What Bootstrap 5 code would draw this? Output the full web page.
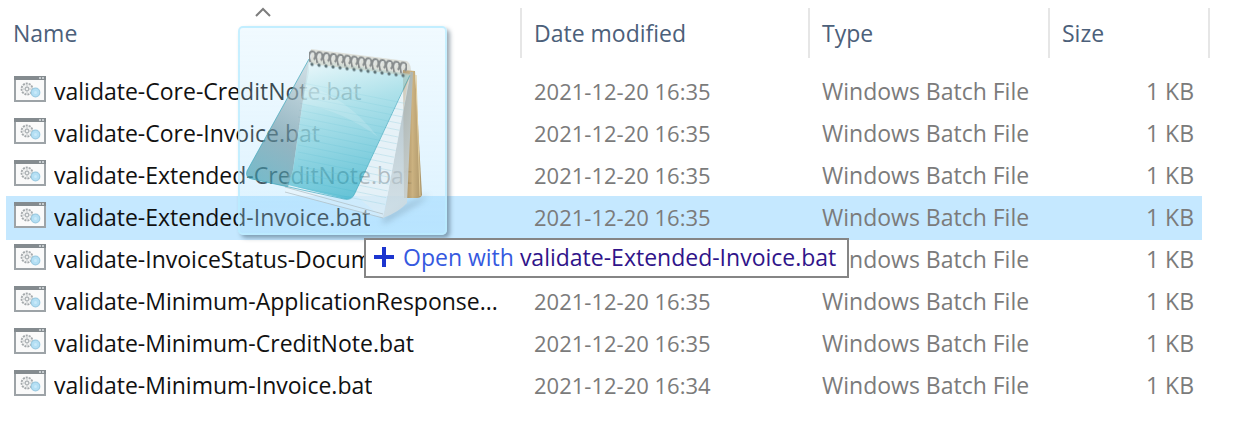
<!DOCTYPE html>
<html lang="en">
<head>
<meta charset="utf-8">
<meta name="viewport" content="width=device-width, initial-scale=1">
<title>Batch files</title>
<link rel="stylesheet" href="https://cdn.jsdelivr.net/npm/bootstrap@5.3.0/dist/css/bootstrap.min.css">
<style>
  body { font-family: "Open Sans", "Noto Sans", sans-serif; font-size: 23px; line-height: 32px; background: #fff; }
  .explorer { padding: 8px 42px 0 6px; }
  .file-list { table-layout: fixed; border-collapse: separate; border-spacing: 0; }
  .col-date { width: 288px; }
  .col-type { width: 240px; }
  .col-size { width: 160px; }
  .file-list th { height: 50px; padding: 0 12px; border-right: 2px solid #e6e6e6; color: #4c607a; font-weight: 400; vertical-align: middle; }
  .file-list th:first-child { padding-left: 7px; }
  .file-list tbody::before { content: ""; display: block; height: 13px; }
  .file-list td { height: 42px; padding: 0 12px 2px; color: #7b7b7b; white-space: nowrap; vertical-align: middle; }
  .file-list td:first-child { padding: 0 12px 2px 8px; color: #111; }
  .file-list td:nth-child(2) { font-size: 22px; }
  .file-list td:last-child { padding-right: 16px; text-align: right; }
  .file-list .picked td { background: #c5e8ff; box-shadow: 0 1px #c5e8ff, 0 -1px #c5e8ff; }
  .file-list .picked td:last-child { clip-path: inset(-1px 8px -1px 0); }
  .bat-icon { width: 32px; height: 26px; margin-bottom: 4px; flex: none; }
  .sort-mark { top: -2px; width: 18px; height: 12px; }
  .drag-ghost { left: 238px; top: 26px; width: 209px; height: 209px; border: 2px solid rgba(185,236,255,.75); border-radius: 5px;
    background: linear-gradient(rgba(190,232,255,.22), rgba(165,222,255,.38)); box-shadow: 3px 3px 4px rgba(60,85,105,.5); }
  .drop-tip { left: 364px; top: 238px; height: 40px; padding: 0 11px 2px 7px; border: 2px solid #858585; background: #fff; color: #3659e0; }
  .drop-tip b { color: #30148a; font-weight: 400; }
</style>
</head>
<body>
<svg class="d-none" aria-hidden="true">
  <symbol id="bat" viewBox="0 0 32 26">
    <rect x="1" y="1" width="30" height="24" fill="#fafafa" stroke="#9da3a7" stroke-width="2"/>
    <path d="M0 0h32v4H0z" fill="#848b8f"/>
    <path d="M25 1h2v2h-2zM28 1h2v2h-2z" fill="#c6cbce"/>
    <circle cx="13" cy="13" r="5.500" fill="#f0f1f1" stroke="#a3a8ab" stroke-width="1.800" stroke-dasharray="2 1"/>
    <circle cx="13" cy="13" r="1.800" fill="none" stroke="#adb2b5" stroke-width="1.200"/>
    <path d="M13 9v2M13 15v2M9 13h2M15 13h2" stroke="#c3c8ca"/>
    <circle cx="21.500" cy="16.500" r="4.300" fill="#b4dff4" stroke="#9ccbe2" stroke-width="1.200"/>
    <circle cx="21.500" cy="16.500" r="1.500" fill="#c9eafa"/>
  </symbol>
</svg>

<main class="explorer position-relative">
  <table class="file-list w-100">
    <colgroup><col><col class="col-date"><col class="col-type"><col class="col-size"></colgroup>
    <thead>
      <tr>
        <th class="position-relative" scope="col" aria-sort="ascending">Name
          <svg class="sort-mark position-absolute start-50 translate-middle-x" viewBox="0 0 18 12" aria-hidden="true"><path d="M2 10l7-7 7 7" fill="none" stroke="#7d7d7d" stroke-width="2"/></svg>
        </th>
        <th scope="col">Date modified</th><th scope="col">Type</th><th scope="col">Size</th>
      </tr>
    </thead>
    <tbody>
      <tr><td><div class="d-flex align-items-center gap-2"><svg class="bat-icon"><use href="#bat"/></svg><span class="text-truncate">validate-Core-CreditNote.bat</span></div></td><td>2021-12-20 16:35</td><td>Windows Batch File</td><td>1 KB</td></tr>
      <tr><td><div class="d-flex align-items-center gap-2"><svg class="bat-icon"><use href="#bat"/></svg><span class="text-truncate">validate-Core-Invoice.bat</span></div></td><td>2021-12-20 16:35</td><td>Windows Batch File</td><td>1 KB</td></tr>
      <tr><td><div class="d-flex align-items-center gap-2"><svg class="bat-icon"><use href="#bat"/></svg><span class="text-truncate">validate-Extended-CreditNote.bat</span></div></td><td>2021-12-20 16:35</td><td>Windows Batch File</td><td>1 KB</td></tr>
      <tr class="picked"><td><div class="d-flex align-items-center gap-2"><svg class="bat-icon"><use href="#bat"/></svg><span class="text-truncate">validate-Extended-Invoice.bat</span></div></td><td>2021-12-20 16:35</td><td>Windows Batch File</td><td>1 KB</td></tr>
      <tr><td><div class="d-flex align-items-center gap-2"><svg class="bat-icon"><use href="#bat"/></svg><span class="text-truncate">validate-InvoiceStatus-Docum</span></div></td><td>2021-12-20 16:35</td><td>Windows Batch File</td><td>1 KB</td></tr>
      <tr><td><div class="d-flex align-items-center gap-2"><svg class="bat-icon"><use href="#bat"/></svg><span class="text-truncate">validate-Minimum-ApplicationResponse...</span></div></td><td>2021-12-20 16:35</td><td>Windows Batch File</td><td>1 KB</td></tr>
      <tr><td><div class="d-flex align-items-center gap-2"><svg class="bat-icon"><use href="#bat"/></svg><span class="text-truncate">validate-Minimum-CreditNote.bat</span></div></td><td>2021-12-20 16:35</td><td>Windows Batch File</td><td>1 KB</td></tr>
      <tr><td><div class="d-flex align-items-center gap-2"><svg class="bat-icon"><use href="#bat"/></svg><span class="text-truncate">validate-Minimum-Invoice.bat</span></div></td><td>2021-12-20 16:34</td><td>Windows Batch File</td><td>1 KB</td></tr>
    </tbody>
  </table>

  <!-- file being dragged -->
  <div class="drag-ghost position-absolute">
    <svg class="d-block w-100 h-100" viewBox="2 1 205 205" aria-hidden="true">
      <defs>
        <linearGradient id="cover" x1=".35" y1="0" x2=".6" y2="1"><stop offset="0" stop-color="#e0f5f8"/><stop offset=".35" stop-color="#8ed6e1"/><stop offset="1" stop-color="#1fa8c2"/></linearGradient>
        <linearGradient id="flap" x1=".6" y1="0" x2=".3" y2="1"><stop offset="0" stop-color="#b4c8cf"/><stop offset=".6" stop-color="#5f8d9c"/><stop offset="1" stop-color="#3497aa"/></linearGradient>
        <linearGradient id="wood" x1="0" x2="1"><stop offset="0" stop-color="#9a7a49"/><stop offset=".5" stop-color="#c8aa72"/><stop offset="1" stop-color="#a58a58"/></linearGradient>
        <linearGradient id="side" x1="0" y1="0" x2="0" y2="1"><stop offset="0" stop-color="#a8b8bf"/><stop offset="1" stop-color="#d3dfe4"/></linearGradient>
        <filter id="soft" x="-20%" y="-50%" width="140%" height="200%"><feGaussianBlur stdDeviation="3"/></filter>
        <clipPath id="sheet"><path d="M172 50L145 187 47 160 69 40z"/></clipPath>
        <pattern id="ring" width="7" height="18" patternUnits="userSpaceOnUse" patternTransform="translate(71 22) skewY(7)">
          <path d="M1.500 13C-1 8 0 2 3.500 2s4 5 1.500 8" fill="none" stroke="#868b8c" stroke-width="2"/>
          <path d="M2 8C2 4 4 2.500 5 4" fill="none" stroke="#e3e8e8" stroke-width="1"/>
          <circle cx="3" cy="15" r="1.700" fill="#607579"/>
        </pattern>
      </defs>
      <path d="M145 190l24-13 22-10-8 8-38 22z" fill="#60798a" opacity=".35" filter="url(#soft)"/>
      <path d="M165 43l12 1 7 124q-1 3-5 3h-13z" fill="url(#wood)" opacity=".9"/>
      <path d="M178 48l4 121" stroke="#e0cb9a" stroke-width="1"/>
      <path d="M172 45h3l-6 131q-8 9-24 15l4-20z" fill="url(#side)" opacity=".85"/>
      <path d="M172 48L145 191 47 165 69 40z" fill="#eef4f6" opacity=".38"/>
      <path d="M172 50L145 191l-28-23z" fill="#e3edf1" opacity=".45"/>
      <g clip-path="url(#sheet)" stroke="#a6d7e4" opacity=".45">
        <path d="M60 55l120 24M60 62l120 24M60 69l120 24M60 76l120 24M60 83l120 24M60 90l120 24M60 97l120 24M60 104l120 24M60 111l120 24M60 118l120 24M60 125l120 24M60 132l120 24M60 139l120 24M60 146l120 24M60 153l120 24M60 160l120 24"/>
      </g>
      <path d="M47 160l98 27M47 165l98 26" stroke="#aebcc2" opacity=".7"/>
      <path d="M71 32L9 144q-2 7 5 8l36 8 5-17 10-70 6-28z" fill="url(#flap)" opacity=".62"/>
      <path d="M71 32l101 15-55 119q-3 7-10 6l-57-14 5-15 10-70z" fill="url(#cover)" opacity=".66"/>
      <path d="M68 58q40 12 72 52-35-26-75-33z" fill="#fff" opacity=".15"/>
      <path d="M71 32L9 144q-2 7 5 8l92 20q8 2 11-6l55-118" fill="none" stroke="#43aabd" stroke-width="1" opacity=".7"/>
      <path d="M73 22l96 12q5 3 4 15L73 37z" fill="#c9bda4" opacity=".4"/>
      <path d="M71 22l98 12v18L71 40z" fill="url(#ring)"/>
    </svg>
  </div>

  <div class="drop-tip position-absolute d-flex align-items-center text-nowrap" role="status">
    <svg class="flex-shrink-0 me-2" width="22" height="22" viewBox="0 0 22 22" aria-hidden="true"><path d="M11 1v20M1 11h20" stroke="#1c35cf" stroke-width="4"/></svg>
    <span>Open with <b>validate-Extended-Invoice.bat</b></span>
  </div>
</main>
<script src="https://cdn.jsdelivr.net/npm/bootstrap@5.3.0/dist/js/bootstrap.bundle.min.js"></script>
</body>
</html>
